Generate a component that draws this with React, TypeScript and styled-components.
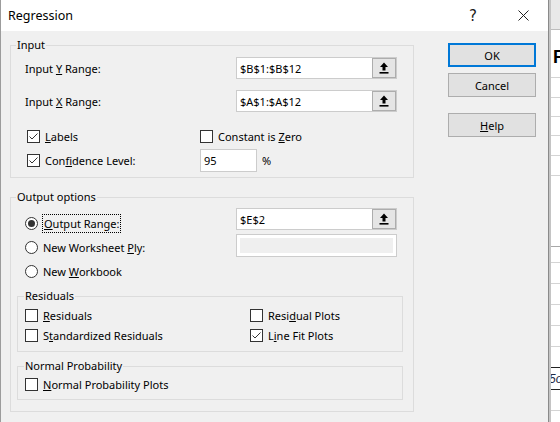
import React from "react";
import styled, { createGlobalStyle } from "styled-components";

const GlobalStyle = createGlobalStyle`
  html, body { margin: 0; padding: 0; background: #ffffff; }
  body {
    font-family: "Segoe UI", "Noto Sans", "Open Sans", sans-serif;
    font-size: 11px;
    color: #000;
  }
  * { box-sizing: border-box; }
  #root { width: 560px; height: 422px; }
`;

const Page = styled.div`
  display: flex;
  width: 560px;
  height: 422px;
  overflow: hidden;
`;

const Dialog = styled.div`
  flex: 0 0 549px;
  display: flex;
  flex-direction: column;
  background: #f0f0f0;
  border-left: 1px solid #9c9c9c;
  border-right: 1px solid #8a8a8a;
`;

const TitleBar = styled.div`
  flex: none;
  height: 31px;
  display: flex;
  align-items: center;
  background: #ffffff;
  padding-left: 7px;
`;

const Title = styled.span`
  flex: 1;
  font-size: 12.5px;
  color: #000;
`;

const CaptionButton = styled.div`
  width: 50px;
  height: 31px;
  display: flex;
  align-items: center;
  justify-content: center;
  color: #1a1a1a;
  font-size: 15px;
  font-family: "Segoe UI", "DejaVu Sans", sans-serif;
`;

const Body = styled.div`
  flex: 1;
  display: flex;
  padding: 6px 0 0 9px;
`;

const MainColumn = styled.div`
  width: 404px;
  display: flex;
  flex-direction: column;
`;

const ButtonColumn = styled.div`
  width: 88px;
  margin-left: 34px;
  padding-top: 6px;
  display: flex;
  flex-direction: column;
`;

const PushButton = styled.button<{ $default?: boolean; $gap?: number }>`
  width: 88px;
  height: 24px;
  margin: ${(p) => p.$gap ?? 0}px 0 0 0;
  padding: 0;
  background: #e1e1e1;
  border: 1px solid ${(p) => (p.$default ? "#0078d7" : "#adadad")};
  box-shadow: ${(p) => (p.$default ? "inset 0 0 0 1px #0078d7" : "none")};
  font-family: inherit;
  font-size: 11px;
  color: #000;
`;

const Group = styled.fieldset<{ $mt?: number; $inner?: boolean }>`
  margin: ${(p) => p.$mt ?? 0}px ${(p) => (p.$inner ? "10px" : "0")} 0
    ${(p) => (p.$inner ? "6px" : "0")};
  padding: 0;
  min-width: 0;
  border: 1px solid #dcdcdc;
`;

const Legend = styled.legend<{ $ml?: number }>`
  margin-left: ${(p) => p.$ml ?? 5}px;
  padding: 0 1px;
  line-height: 16px;
  font-size: 11px;
`;

const InputContent = styled.div`
  padding: 4px 0 5px 14px;
  display: flex;
  flex-direction: column;
`;

const FieldRow = styled.div<{ $mt?: number }>`
  display: flex;
  align-items: center;
  height: 22px;
  margin-top: ${(p) => p.$mt ?? 0}px;
`;

const FieldLabel = styled.span`
  width: 211px;
`;

const RangeField = styled.div`
  width: 161px;
  height: 22px;
  display: flex;
  align-items: stretch;
  background: #ffffff;
  border: 1px solid #cccccc;
`;

const RangeText = styled.span`
  flex: 1;
  padding-left: 3px;
  display: flex;
  align-items: center;
`;

const PickButton = styled.div`
  width: 24px;
  display: flex;
  align-items: center;
  justify-content: center;
  background: #e5e5e5;
  border: 1px solid #adadad;
`;

const DisabledField = styled.div`
  width: 161px;
  height: 23px;
  padding: 3px;
  background: #ffffff;
  border: 1px solid #cccccc;
`;

const DisabledFill = styled.div`
  height: 100%;
  background: #efefef;
`;

const OptionRow = styled.div<{ $h?: number; $mt?: number; $pl?: number }>`
  display: flex;
  align-items: center;
  height: ${(p) => p.$h ?? 13}px;
  margin-top: ${(p) => p.$mt ?? 0}px;
  padding-left: ${(p) => p.$pl ?? 0}px;
`;

const OptionCell = styled.div<{ $w?: number }>`
  display: flex;
  align-items: center;
  gap: 5px;
  width: ${(p) => (p.$w ? `${p.$w}px` : "auto")};
`;

const Box = styled.span`
  flex: none;
  width: 13px;
  height: 13px;
  background: #ffffff;
  border: 1px solid #333333;
  display: flex;
  align-items: center;
  justify-content: center;
`;

const Radio = styled.span`
  flex: none;
  width: 13px;
  height: 13px;
  border-radius: 50%;
  background: #ffffff;
  border: 1px solid #333333;
  display: flex;
  align-items: center;
  justify-content: center;
`;

const RadioDot = styled.span`
  width: 7px;
  height: 7px;
  border-radius: 50%;
  background: #333333;
`;

const SmallInput = styled.div`
  width: 57px;
  height: 23px;
  background: #ffffff;
  border: 1px solid #cccccc;
  display: flex;
  align-items: center;
  padding-left: 3px;
`;

const Percent = styled.span`
  margin-left: 5px;
`;

const FocusText = styled.span`
  border: 1px dotted #000;
  padding: 1px 1px;
  margin-left: -1px;
`;

const OutputContent = styled.div`
  display: flex;
  flex-direction: column;
  padding-bottom: 11px;
`;

const OutputTop = styled.div`
  display: flex;
`;

const RadioColumn = styled.div`
  width: 225px;
  padding-left: 14px;
  padding-top: 6px;
  display: flex;
  flex-direction: column;
`;

const RadioRow = styled.div`
  height: 24px;
  display: flex;
  align-items: center;
  gap: 5px;
`;

const FieldColumn = styled.div`
  padding-top: 3px;
  display: flex;
  flex-direction: column;
  gap: 4px;
`;

const GroupContent = styled.div<{ $pt?: number; $pb?: number }>`
  padding: ${(p) => p.$pt ?? 1}px 0 ${(p) => p.$pb ?? 6}px 7px;
  display: grid;
  grid-template-columns: 225px 1fr;
  grid-auto-rows: 20px;
  align-items: center;
`;

/* spreadsheet visible behind the dialog */
const Sheet = styled.div`
  flex: 1;
  display: flex;
  flex-direction: column;
  background: #ffffff;
  border-left: 2px solid #c4c4c4;
  overflow: hidden;
`;

const SheetHeader = styled.div`
  height: 30px;
  flex: none;
  background: #e9e9e9;
  border-bottom: 1px solid #bdbdbd;
`;

const SheetRow = styled.div<{ $h: number; $line?: string; $bold?: boolean }>`
  flex: none;
  height: ${(p) => p.$h}px;
  border-bottom: 1px solid ${(p) => p.$line ?? "#d4d4d4"};
  display: flex;
  align-items: center;
  white-space: nowrap;
  padding-left: 2px;
  padding-top: ${(p) => (p.$bold ? 8 : 0)}px;
  font-family: "Liberation Sans", Arial, sans-serif;
  font-size: ${(p) => (p.$bold ? "18px" : "12px")};
  font-weight: ${(p) => (p.$bold ? 700 : 400)};
`;

const SheetItalic = styled.span`
  font-style: italic;
  color: #1f2a44;
  margin-left: -4px;
`;

const Check = () => (
  <svg width="11" height="11" viewBox="0 0 11 11">
    <polyline points="1.5,5.5 4,8 9.5,2.5" fill="none" stroke="#333" strokeWidth="1" />
  </svg>
);

const PickIcon = () => (
  <svg width="10" height="12" viewBox="0 0 10 12">
    <path d="M5 0.5 L9 5 L6.5 5 L6.5 8.5 L3.5 8.5 L3.5 5 L1 5 Z" fill="#000" />
    <rect x="0.5" y="10" width="9" height="1.6" fill="#000" />
  </svg>
);

const CloseIcon = () => (
  <svg width="11" height="11" viewBox="0 0 11 11">
    <path d="M0.5 0.5 L10.5 10.5 M10.5 0.5 L0.5 10.5" stroke="#222" strokeWidth="1" />
  </svg>
);

const CheckOption: React.FC<{ checked?: boolean; children: React.ReactNode; w?: number }> = ({
  checked,
  children,
  w,
}) => (
  <OptionCell $w={w}>
    <Box>{checked && <Check />}</Box>
    <span>{children}</span>
  </OptionCell>
);

const sheetRows: { h: number; line?: string }[] = [
  { h: 20 },
  { h: 19 },
  { h: 19 },
  { h: 20 },
  { h: 20 },
  { h: 71, line: "#a8a8a8" },
  { h: 16 },
  { h: 21 },
  { h: 21 },
  { h: 21 },
  { h: 21 },
  { h: 21, line: "#222" },
];

export default function App() {
  return (
    <Page>
      <GlobalStyle />
      <Dialog>
        <TitleBar>
          <Title>Regression</Title>
          <CaptionButton>?</CaptionButton>
          <CaptionButton>
            <CloseIcon />
          </CaptionButton>
        </TitleBar>
        <Body>
          <MainColumn>
            <Group>
              <Legend>Input</Legend>
              <InputContent>
                <FieldRow>
                  <FieldLabel>
                    Input <u>Y</u> Range:
                  </FieldLabel>
                  <RangeField>
                    <RangeText>$B$1:$B$12</RangeText>
                    <PickButton>
                      <PickIcon />
                    </PickButton>
                  </RangeField>
                </FieldRow>
                <FieldRow $mt={11}>
                  <FieldLabel>
                    Input <u>X</u> Range:
                  </FieldLabel>
                  <RangeField>
                    <RangeText>$A$1:$A$12</RangeText>
                    <PickButton>
                      <PickIcon />
                    </PickButton>
                  </RangeField>
                </FieldRow>
                <OptionRow $mt={18} $pl={2}>
                  <CheckOption checked w={173}>
                    <u>L</u>abels
                  </CheckOption>
                  <CheckOption>
                    Constant is <u>Z</u>ero
                  </CheckOption>
                </OptionRow>
                <OptionRow $mt={6} $h={23} $pl={2}>
                  <CheckOption checked w={173}>
                    Con<u>f</u>idence Level:
                  </CheckOption>
                  <SmallInput>95</SmallInput>
                  <Percent>%</Percent>
                </OptionRow>
              </InputContent>
            </Group>

            <Group $mt={11}>
              <Legend>Output options</Legend>
              <OutputContent>
                <OutputTop>
                  <RadioColumn>
                    <RadioRow>
                      <Radio>
                        <RadioDot />
                      </Radio>
                      <FocusText>
                        <u>O</u>utput Range:
                      </FocusText>
                    </RadioRow>
                    <RadioRow>
                      <Radio />
                      <span>
                        New Worksheet <u>P</u>ly:
                      </span>
                    </RadioRow>
                    <RadioRow>
                      <Radio />
                      <span>
                        New <u>W</u>orkbook
                      </span>
                    </RadioRow>
                  </RadioColumn>
                  <FieldColumn>
                    <RangeField>
                      <RangeText>$E$2</RangeText>
                      <PickButton>
                        <PickIcon />
                      </PickButton>
                    </RangeField>
                    <DisabledField>
                      <DisabledFill />
                    </DisabledField>
                  </FieldColumn>
                </OutputTop>

                <Group $mt={5} $inner>
                  <Legend $ml={6}>Residuals</Legend>
                  <GroupContent>
                    <CheckOption>
                      <u>R</u>esiduals
                    </CheckOption>
                    <CheckOption>
                      Resi<u>d</u>ual Plots
                    </CheckOption>
                    <CheckOption>
                      S<u>t</u>andardized Residuals
                    </CheckOption>
                    <CheckOption checked>
                      L<u>i</u>ne Fit Plots
                    </CheckOption>
                  </GroupContent>
                </Group>

                <Group $mt={6} $inner>
                  <Legend $ml={6}>Normal Probability</Legend>
                  <GroupContent $pt={0} $pb={5}>
                    <CheckOption>
                      <u>N</u>ormal Probability Plots
                    </CheckOption>
                  </GroupContent>
                </Group>
              </OutputContent>
            </Group>
          </MainColumn>

          <ButtonColumn>
            <PushButton $default>OK</PushButton>
            <PushButton $gap={6}>Cancel</PushButton>
            <PushButton $gap={16}>
              <u>H</u>elp
            </PushButton>
          </ButtonColumn>
        </Body>
      </Dialog>

      <Sheet>
        <SheetHeader />
        <SheetRow $h={48} $bold>
          F
        </SheetRow>
        {sheetRows.map((r, i) => (
          <SheetRow key={i} $h={r.h} $line={r.line} />
        ))}
        <SheetRow $h={22} $line="#222">
          <SheetItalic>5o</SheetItalic>
        </SheetRow>
        <SheetRow $h={21} />
        <SheetRow $h={21} />
      </Sheet>
    </Page>
  );
}
